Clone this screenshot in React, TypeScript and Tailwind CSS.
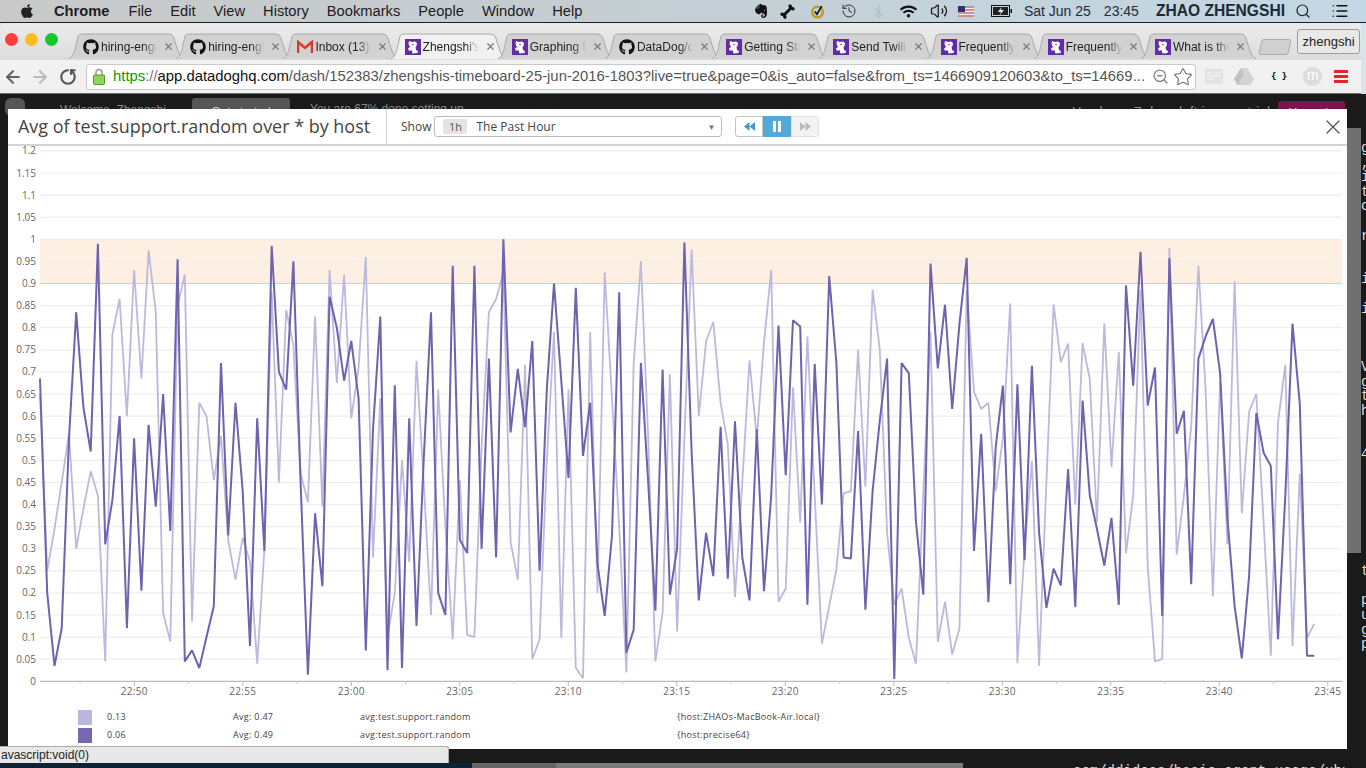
import React from 'react';
import { FaApple, FaBone, FaGithub, FaWifi, FaEvernote } from 'react-icons/fa';
import { ArrowLeft, ArrowRight, Bluetooth, History, List, RotateCw, Search, Star, Volume2, X, ZoomOut } from 'lucide-react';

const DARK = [
  0.685, 0.2, 0.035, 0.12, 0.55, 0.835, 0.62, 0.52, 0.99, 0.31, 0.41, 0.6, 0.12, 0.55, 0.205, 0.58, 0.395, 0.65, 0.34, 0.955,
  0.045, 0.07, 0.03, 0.1, 0.17, 0.72, 0.33, 0.63, 0.43, 0.08, 0.595, 0.295, 0.985, 0.7, 0.66, 0.95, 0.45, 0.015, 0.38, 0.215,
  0.87, 0.8, 0.68, 0.77, 0.64, 0.07, 0.57, 0.825, 0.025, 0.67, 0.03, 0.595, 0.125, 0.5, 0.835, 0.2, 0.15, 0.94, 0.32, 0.29,
  0.94, 0.3, 0.73, 0.28, 1.0, 0.563, 0.707, 0.575, 0.77, 0.25, 0.66, 0.9, 0.68, 0.46, 0.89, 0.51, 0.63, 0.265, 0.148, 0.33,
  0.88, 0.065, 0.117, 0.72, 0.45, 0.16, 0.705, 0.196, 0.3, 0.993, 0.52, 0.183, 0.336, 0.238, 0.576, 0.232, 0.588, 0.28, 0.183, 0.57,
  0.204, 0.42, 0.805, 0.466, 0.817, 0.803, 0.173, 0.718, 0.4, 0.917, 0.72, 0.28, 0.278, 0.566, 0.162, 0.43, 0.59, 0.73, 0.005, 0.72,
  0.697, 0.36, 0.196, 0.945, 0.708, 0.852, 0.616, 0.81, 0.958, 0.295, 0.56, 0.179, 0.53, 0.669, 0.22, 0.672, 0.274, 0.714, 0.336, 0.166,
  0.255, 0.217, 0.48, 0.168, 0.635, 0.42, 0.344, 0.262, 0.37, 0.173, 0.896, 0.669, 0.972, 0.624, 0.71, 0.148, 0.957, 0.56, 0.612, 0.22,
  0.73, 0.78, 0.82, 0.697, 0.37, 0.17, 0.052, 0.238, 0.607, 0.517, 0.487, 0.095, 0.42, 0.809, 0.627, 0.058, 0.058,
];

const LIGHT = [
  0.65, 0.25, 0.345, 0.45, 0.56, 0.3, 0.39, 0.475, 0.42, 0.045, 0.785, 0.865, 0.6, 0.93, 0.685, 0.975, 0.835, 0.155, 0.09, 0.85,
  0.92, 0.135, 0.63, 0.6, 0.455, 0.555, 0.32, 0.23, 0.325, 0.27, 0.04, 0.3, 0.88, 0.45, 0.84, 0.76, 0.47, 0.405, 0.825, 0.395,
  0.93, 0.675, 0.92, 0.595, 0.71, 0.96, 0.28, 0.64, 0.1, 0.2, 0.5, 0.27, 0.725, 0.45, 0.15, 0.66, 0.35, 0.095, 0.455, 0.105,
  0.1, 0.53, 0.835, 0.865, 0.925, 0.315, 0.23, 0.716, 0.05, 0.095, 0.5, 0.79, 0.098, 0.66, 0.03, 0.007, 0.79, 0.2, 0.925, 0.64,
  0.35, 0.02, 0.72, 0.95, 0.55, 0.045, 0.155, 0.695, 0.113, 0.55, 0.977, 0.6, 0.77, 0.813, 0.63, 0.536, 0.19, 0.45, 0.726, 0.55,
  0.767, 0.93, 0.18, 0.21, 0.665, 0.36, 0.78, 0.42, 0.085, 0.17, 0.253, 0.425, 0.43, 0.75, 0.44, 0.886, 0.75, 0.336, 0.173, 0.21,
  0.098, 0.04, 0.43, 0.79, 0.089, 0.18, 0.061, 0.12, 0.885, 0.655, 0.616, 0.63, 0.43, 0.55, 0.855, 0.041, 0.3, 0.498, 0.035, 0.45,
  0.853, 0.722, 0.764, 0.4, 0.765, 0.684, 0.36, 0.81, 0.485, 0.745, 0.29, 0.42, 0.885, 0.26, 0.045, 0.05, 0.98, 0.287, 0.42, 0.575,
  0.94, 0.66, 0.192, 0.68, 0.31, 0.905, 0.38, 0.61, 0.65, 0.36, 0.058, 0.585, 0.716, 0.08, 0.47, 0.098, 0.13,
];

const toY = (v: number) => 681.3 - v * 442;
const toPoints = (data: number[]) => data.map((v, i) => `${(40 + 7.24 * i).toFixed(1)},${toY(v).toFixed(1)}`).join(' ');

const Y_TICKS = Array.from({ length: 25 }, (_, i) => i * 0.05);
const X_TICKS = ['22:50', '22:55', '23:00', '23:05', '23:10', '23:15', '23:20', '23:25', '23:30', '23:35', '23:40', '23:45'];

const MENU = ['File', 'Edit', 'View', 'History', 'Bookmarks', 'People', 'Window', 'Help'];

const CODE_LINES = [
  'g', ',', 'i', 't', 'c', '', 'r', '', '', 'i', '', 'i', '', '', '', 'V', 'g', 't', 'h', '', '', '4', '', '', '', '', '', '', '', 't', '', 'p', 'u', 'g', 'p',
];

const DogIcon: React.FC = () => (
  <svg width="16" height="16" viewBox="0 0 16 16" className="shrink-0">
    <rect width="16" height="16" fill="#632ca6" />
    <path d="M4 2l3 1 3-.5 2 1.500-.5 3-1 1 .5 3 2 1-.5 2-5 .5-1-3.500-2.500 1L3 9.500l2-1.500L3.500 5z" fill="#fff" />
    <circle cx="8" cy="5.500" r=".8" fill="#632ca6" />
  </svg>
);

const GmailIcon: React.FC = () => (
  <svg width="16" height="14" viewBox="0 0 16 14" className="shrink-0">
    <path d="M1 13V2l7 6 7-6v11" fill="none" stroke="#d8372b" strokeWidth="2.400" />
    <path d="M2 1.500l6 5 6-5" fill="none" stroke="#e8574a" strokeWidth="1" />
  </svg>
);

const TABS: { icon: React.ReactNode; title: string; active?: boolean }[] = [
  { icon: <FaGithub size={16} className="shrink-0 text-[#111]" />, title: 'hiring-engineers' },
  { icon: <FaGithub size={16} className="shrink-0 text-[#111]" />, title: 'hiring-engineers' },
  { icon: <GmailIcon />, title: 'Inbox (13)' },
  { icon: <DogIcon />, title: "Zhengshi's Timeboard", active: true },
  { icon: <DogIcon />, title: 'Graphing Primer' },
  { icon: <FaGithub size={16} className="shrink-0 text-[#111]" />, title: 'DataDog/docs' },
  { icon: <DogIcon />, title: 'Getting Started' },
  { icon: <DogIcon />, title: 'Send Twilio SMS' },
  { icon: <DogIcon />, title: 'Frequently Asked' },
  { icon: <DogIcon />, title: 'Frequently Asked' },
  { icon: <DogIcon />, title: 'What is the Agent' },
];

const Tab: React.FC<{ icon: React.ReactNode; title: string; active?: boolean }> = (props) => (
  <div className="relative w-[115.200px] h-[26px] -mr-[8px] shrink-0 flex items-center pl-[14px]">
    <svg width="115" height="26" viewBox="0 0 115 26" className="absolute inset-0">
      <path
        d="M0 26C4 24 6 18 7 12L9 3Q10 1 13 1H100Q103 1 104.500 4L109 18Q111 25 115 26"
        fill={props.active ? '#f1f1f1' : '#d2d2d2'}
        stroke="#a9a9a9"
      />
    </svg>
    <div className="relative flex items-center gap-[2px] w-[74px] overflow-hidden pt-[1px] [mask-image:linear-gradient(to_right,black_82%,transparent)]">
      {props.icon}
      <span className="text-[12px] whitespace-nowrap text-[#222] font-['Liberation_Sans',sans-serif]">{props.title}</span>
    </div>
    <X size={11} strokeWidth={2.500} className="relative ml-[6px] text-[#777]" />
  </div>
);

const MenuBar: React.FC = () => (
  <div className="h-[23px] shrink-0 flex items-center bg-gradient-to-r from-[#c9c9c9] via-[#c4ced4] to-[#c3d8e5] border-b border-[#14202c] font-['Liberation_Sans',sans-serif] text-[14.700px] text-[#1c1c1c]">
    <FaApple size={16} className="ml-[19px] mr-[19px] text-[#222]" />
    <span className="font-bold mr-[19px]">Chrome</span>
    <div className="flex gap-[18px]">
      {MENU.map((m) => (
        <span key={m}>{m}</span>
      ))}
    </div>
    <div className="ml-auto flex items-center text-[#1f2b36]">
      <FaEvernote size={16} className="text-[#111] mr-[11px]" />
      <FaBone size={15} className="text-[#111] -rotate-45 mr-[15px]" />
      <svg width="15" height="15" viewBox="0 0 14 14" className="mr-[16px]">
        <circle cx="7" cy="7.500" r="5" fill="none" stroke="#c99a12" strokeWidth="2.200" />
        <path d="M4.500 7l2 2.500L11 2" fill="none" stroke="#111" strokeWidth="1.600" />
      </svg>
      <History size={16} strokeWidth={1.500} className="text-[#333] mr-[14px]" />
      <Bluetooth size={15} strokeWidth={1.300} className="text-[#aab4ba] mr-[14px]" />
      <FaWifi size={17} className="text-[#111] mr-[13px]" />
      <Volume2 size={18} strokeWidth={1.600} className="text-[#111] mr-[10px]" />
      <svg width="16" height="11" viewBox="0 0 16 11" className="mr-[17px]">
        <rect width="16" height="11" fill="#f0f0f0" />
        <path d="M0 1h16M0 4h16M0 7h16M0 10h16" stroke="#b03030" strokeWidth="1" />
        <rect width="7" height="6" fill="#2a3472" />
      </svg>
      <svg width="21" height="12" viewBox="0 0 21 12" className="mr-[12px]">
        <rect x=".5" y=".5" width="18" height="11" fill="none" stroke="#111" />
        <rect x="2" y="2" width="15" height="8" fill="#222" />
        <rect x="19.500" y="4" width="1.500" height="4" fill="#111" />
        <path d="M10.500 2L7 7h3l-1.500 3.500L13 5h-3z" fill="#eee" />
      </svg>
      <span className="mr-[13px] text-[14px]">Sat Jun 25</span>
      <span className="mr-[17px] text-[14px]">23:45</span>
      <span className="font-bold mr-[10px] text-[15.600px] text-[#1c2a38]">ZHAO ZHENGSHI</span>
      <Search size={16} strokeWidth={1.800} className="text-[#222] mr-[20px]" />
      <List size={18} strokeWidth={2} className="text-[#111] mr-[17px]" />
    </div>
  </div>
);

const ChromeBar: React.FC = () => (
  <div className="shrink-0 flex flex-col bg-[#d8e4ec]">
    <div className="w-[1361px] h-[37px] flex items-end rounded-t-[5px] bg-gradient-to-b from-[#ececec] to-[#dcdcdc]">
      <div className="flex items-center gap-[7px] pl-[5px] self-start pt-[10px] w-[69px] shrink-0">
        <span className="w-[13px] h-[13px] rounded-full bg-[#fc3d39]" />
        <span className="w-[13px] h-[13px] rounded-full bg-[#fdbb1f]" />
        <span className="w-[13px] h-[13px] rounded-full bg-[#18c72f]" />
      </div>
      <div className="flex items-end h-[26px] mb-[1px]">
        {TABS.map((t, i) => (
          <Tab key={i} icon={t.icon} title={t.title} active={t.active} />
        ))}
        <div className="w-[30px] h-[16px] ml-[12px] mb-[4px] -skew-x-12 rounded-[3px] bg-[#d0d0d0] border border-[#aaa]" />
      </div>
      <div className="ml-[7px] mb-[6px] w-[63px] h-[25px] flex items-center justify-center rounded-[3px] border border-[#9c9c9c] bg-[#e8e8e8] text-[13px] text-[#222] font-['Liberation_Sans',sans-serif]">
        zhengshi
      </div>
    </div>
    <div className="w-[1361px] h-[34px] flex items-center bg-[#f1f1f1] border-b border-[#6a6a6a] pl-[3px]">
      <ArrowLeft size={20} strokeWidth={2.600} className="text-[#666]" />
      <ArrowRight size={20} strokeWidth={2.600} className="ml-[7px] text-[#bbb]" />
      <RotateCw size={18} strokeWidth={2.800} className="ml-[9px] text-[#555] -scale-x-100 rotate-90" />
      <div className="ml-[9px] w-[1110px] h-[26px] flex items-center rounded-[3px] border border-[#c8c8c8] bg-white pl-[6px] font-['Liberation_Sans',sans-serif] text-[14.850px] whitespace-nowrap overflow-hidden">
        <svg width="12" height="17" viewBox="0 0 12 17" className="shrink-0 mr-[8px]">
          <path d="M3 7V4.500a3 3 0 016 0V7" fill="none" stroke="#999" strokeWidth="1.500" />
          <rect x=".5" y="7" width="11" height="9.500" rx="1" fill="#8ed35c" stroke="#4f9a2a" />
        </svg>
        <span className="text-[#0a9a0a]">https</span>
        <span className="text-[#777]">://</span>
        <span className="text-[#111]">app.datadoghq.com</span>
        <span className="text-[#555]">
          /dash/152383/zhengshis-timeboard-25-jun-2016-1803?live=true&amp;page=0&amp;is_auto=false&amp;from_ts=1466909120603&amp;to_ts=14669...
        </span>
        <ZoomOut size={17} strokeWidth={2} className="shrink-0 ml-auto text-[#888]" />
        <Star size={20} strokeWidth={1.400} className="shrink-0 ml-[4px] mr-[2px] text-[#777]" />
      </div>
      <svg width="18" height="15" viewBox="0 0 18 15" className="ml-[9px]">
        <rect width="18" height="15" rx="1" fill="#e2e2e2" />
        <path d="M2 4h14M2 7h14M2 10h8" stroke="#f6f6f6" />
      </svg>
      <svg width="20" height="17" viewBox="0 0 20 17" className="ml-[11px]">
        <path d="M7 0h6l7 11-3 6H3l-3-6z" fill="#d4d4d4" />
        <path d="M7 0l3 6-6 11-4-6z" fill="#c2c2c2" />
      </svg>
      <span className="ml-[17px] text-[9px] font-bold text-[#111] font-['DejaVu_Sans_Mono',monospace]">{'{ }'}</span>
      <span className="ml-[16px] w-[19px] h-[19px] rounded-full bg-[#dcdcdc] text-white text-[14px] leading-[17px] text-center font-['Liberation_Sans',sans-serif]">
        m
      </span>
      <div className="ml-[12px] w-[14px] flex flex-col gap-[2px]">
        <span className="h-[3px] bg-[#e0282a]" />
        <span className="h-[3px] bg-[#e0282a]" />
        <span className="h-[3px] bg-[#e0282a]" />
      </div>
    </div>
  </div>
);

const Chart: React.FC = () => (
  <svg width="1339" height="560" viewBox="8 146 1339 560" className="block font-['Open_Sans',sans-serif]">
    <rect x="40" y={toY(1)} width="1302" height={toY(0.9) - toY(1)} fill="#fdf0e2" />
    {Y_TICKS.map((v, i) => (
      <g key={i}>
        <line x1="40" x2="1342" y1={toY(v)} y2={toY(v)} stroke={v === 0 ? '#bbb' : '#eeeeee'} strokeWidth="1.200" />
        <text x="36" y={toY(v) + 3.500} textAnchor="end" fontSize="10" fill="#666">
          {Number(v.toFixed(2))}
        </text>
      </g>
    ))}
    <line x1="40" x2="1342" y1={toY(0.9)} y2={toY(0.9)} stroke="#efc9a3" strokeWidth="1.200" />
    {X_TICKS.map((t, i) => {
      const x = 134.3 + i * 108.5;
      return (
        <g key={t}>
          <line x1={x} x2={x} y1="681" y2="686" stroke="#bbb" />
          <line x1={x - 54.250} x2={x - 54.250} y1="681" y2="684" stroke="#ccc" />
          <text x={x} y="695" textAnchor="middle" fontSize="10" letterSpacing=".3" fill="#666">
            {t}
          </text>
        </g>
      );
    })}
    <polyline points={toPoints(LIGHT)} fill="none" stroke="#bbbadd" strokeWidth="1.800" strokeLinejoin="bevel" />
    <polyline points={toPoints(DARK)} fill="none" stroke="#6f62ae" strokeWidth="2" strokeLinejoin="bevel" />
  </svg>
);

const LEGEND = [
  { swatch: 'bg-[#b9b8dc]', value: '0.13', avg: 'Avg: 0.47', host: '{host:ZHAOs-MacBook-Air.local}' },
  { swatch: 'bg-[#7669b0]', value: '0.06', avg: 'Avg: 0.49', host: '{host:precise64}' },
];

const Modal: React.FC = () => (
  <div className="absolute left-[8px] top-[15px] w-[1339px] h-[640px] flex flex-col bg-white">
    <div className="h-[37px] shrink-0 flex items-center border-b-2 border-[#d4d4d4] font-['Open_Sans',sans-serif]">
      <div className="w-[379px] h-full flex items-center pl-[10px] border-r border-[#d4d4d4] text-[17.950px] text-[#444] whitespace-nowrap">
        Avg of test.support.random over * by host
      </div>
      <span className="ml-[14px] text-[12px] text-[#444]">Show</span>
      <div className="ml-[3px] w-[288px] h-[21px] flex items-center rounded-[3px] border border-[#bbb] pl-[8px] pr-[6px] text-[12px] text-[#444]">
        <span className="w-[24px] h-[15px] leading-[15px] rounded-[2px] bg-[#e4e4e4] text-center text-[11px] text-[#555]">1h</span>
        <span className="ml-[9px]">The Past Hour</span>
        <span className="ml-auto text-[8px] text-[#777]">▼</span>
      </div>
      <div className="ml-[13px] flex h-[21px]">
        <div className="w-[28px] flex items-center justify-center rounded-l-[3px] border border-[#c4c4c4]">
          <svg width="11" height="9" viewBox="0 0 11 9">
            <path d="M5.500 0v9L0 4.500zM11 0v9L5.500 4.500z" fill="#3f9bd0" />
          </svg>
        </div>
        <div className="w-[28px] flex items-center justify-center gap-[2px] bg-[#55a9d9]">
          <span className="w-[3px] h-[11px] bg-white" />
          <span className="w-[3px] h-[11px] bg-white" />
        </div>
        <div className="w-[28px] flex items-center justify-center rounded-r-[3px] border border-[#e0e0e0] bg-[#f2f2f2]">
          <svg width="11" height="9" viewBox="0 0 11 9">
            <path d="M0 0v9l5.500-4.500zM5.500 0v9L11 4.500z" fill="#bbb" />
          </svg>
        </div>
      </div>
      <X size={24} strokeWidth={1.300} className="ml-auto mr-[2px] text-[#555]" />
    </div>
    <Chart />
    <div className="pl-[70px] pt-[2px] grid grid-cols-[29px_126px_127px_317px_1fr] auto-rows-[18px] items-center font-['Open_Sans',sans-serif] text-[9px] tracking-[.3px] text-[#444]">
      {LEGEND.map((l) => (
        <React.Fragment key={l.value}>
          <span className={`w-[14px] h-[15px] ${l.swatch}`} />
          <span>{l.value}</span>
          <span>{l.avg}</span>
          <span>avg:test.support.random</span>
          <span>{l.host}</span>
        </React.Fragment>
      ))}
    </div>
  </div>
);

const Backdrop: React.FC = () => (
  <div className="relative flex-1 flex min-h-0 bg-[#1a1a1a] overflow-hidden">
    <div className="flex-1 min-w-0 flex flex-col">
      <div className="h-[30px] flex items-start pt-[4px] font-['Liberation_Sans',sans-serif] text-[12px] text-[#888]">
        <span className="ml-[5px] w-[20px] h-[18px] rounded-[6px] bg-[#555]" />
        <span className="ml-[35px] mt-[3px] w-[132px]">Welcome, Zhengshi</span>
        <span className="w-[98px] h-[22px] pt-[5px] rounded-[3px] bg-[#555] text-center text-[#ccc]">Get started</span>
        <span className="ml-[20px] mt-[2px]">You are 67% done setting up</span>
        <span className="ml-auto mt-[4px] text-[14px]">You have 7 days left in your trial</span>
        <span className="ml-[8px] mr-[2px] mt-[3px] w-[67px] h-[22px] rounded-[3px] bg-[#7b1450] pt-[3px] text-center text-[#ddd]">Upgrade</span>
      </div>
      <div className="flex-1" />
      <div className="h-[5px] flex overflow-hidden">
        <div className="w-[472px] shrink-0 bg-[#0e2233]" />
        <div className="w-[84px] shrink-0 bg-[#666]" />
        <div className="w-[407px] shrink-0 bg-[#7a7a7a]" />
        <div className="ml-[110px] shrink-0 text-[14px] leading-[16px] whitespace-nowrap text-[#ddd] font-['Liberation_Mono',monospace]">
          com/ddidocs/basic_agent_usage/ubuntu
        </div>
      </div>
    </div>
    <div className="w-[14px] shrink-0 mt-[34px] h-[425px] bg-[#707070]" />
    <div className="w-[5px] shrink-0 overflow-hidden pt-[47px] font-['Liberation_Mono',monospace] text-[14px] leading-[14.600px] text-[#ddd]">
      {CODE_LINES.map((c, i) => (
        <div key={i} className="h-[14.600px]">
          {c}
        </div>
      ))}
    </div>
    <Modal />
    <div className="absolute left-0 bottom-[5px] w-[449px] h-[17px] rounded-tr-[3px] border-t border-r border-[#aaa] bg-[#e8e8e8] pl-[1px] text-[12px] leading-[16px] text-[#222] font-['Liberation_Sans',sans-serif]">
      avascript:void(0)
    </div>
  </div>
);

export default function App() {
  return (
    <div className="w-[1366px] h-[768px] flex flex-col overflow-hidden bg-[#1a1a1a]">
      <MenuBar />
      <ChromeBar />
      <Backdrop />
    </div>
  );
}
